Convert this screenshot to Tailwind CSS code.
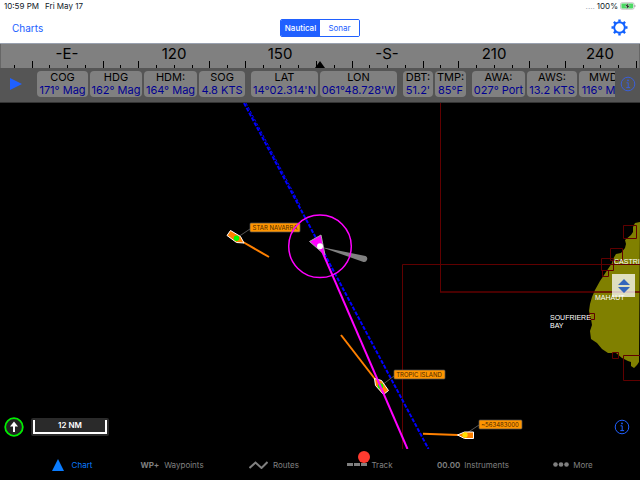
<!DOCTYPE html>
<html lang="en">
<head>
  <meta charset="UTF-8">
  <meta name="viewport" content="width=device-width, initial-scale=1.0">
  <title>Nautical Chart</title>
  <script src="https://cdn.jsdelivr.net/npm/@tailwindcss/browser@4"></script>
</head>
<body class="flex flex-col h-screen overflow-hidden bg-black font-['Inter',sans-serif]">
  <!-- Status bar -->
  <div class="flex items-center justify-between h-3 pl-1 pr-1 shrink-0 bg-white text-[8px] leading-3 text-gray-900">
    <div class="flex gap-[6px]">
      <span>10:59 PM</span>
      <span>Fri May 17</span>
    </div>
    <div class="flex items-center gap-[2px]">
      <span class="text-gray-400">....</span>
      <span>100%</span>
      <svg class="w-4 h-2" viewBox="0 0 16 8">
        <rect x="0.5" y="0.8" width="13.6" height="6.4" rx="1.6" fill="#fff" stroke="#aaa" stroke-width="0.7"/>
        <rect x="1.4" y="1.6" width="11.8" height="4.8" rx="0.8" fill="#4cd964"/>
        <path d="M8.4 0.8 5 4.5h2L6.4 7.4 10 3.6H7.8z" fill="#111" stroke="#fff" stroke-width="0.4"/>
        <path d="M14.9 3v2" stroke="#999" stroke-width="0.9"/>
      </svg>
    </div>
  </div>

  <!-- Navigation bar -->
  <header class="grid grid-cols-3 items-center h-8 px-3 shrink-0 border-b border-gray-400 bg-white text-[#2060ff]">
    <a href="#charts" class="mt-px text-[10px]">Charts</a>
    <div class="flex justify-self-center w-20 h-[18px] rounded-[2px] border border-[#2060ff] overflow-hidden text-[8px]">
      <button class="flex-1 bg-[#2060ff] text-white font-medium">Nautical</button>
      <button class="flex-1 bg-white">Sonar</button>
    </div>
    <button class="justify-self-end" aria-label="Settings">
      <svg class="w-[17px] h-[17px]" viewBox="0 0 17 17" fill="none" stroke="#1060ff">
        <circle cx="8.5" cy="8.5" r="5.3" stroke-width="1.9"/>
        <path stroke-width="2.4" d="M8.5 2.8V.5M8.5 14.2v2.3M2.8 8.5H.5M14.2 8.5h2.3M4.5 4.5 2.9 2.9M12.5 4.5l1.6-1.6M4.5 12.5l-1.6 1.6M12.5 12.5l1.6 1.6"/>
      </svg>
    </button>
  </header>

  <!-- Compass tape -->
  <svg class="block w-full shrink-0 bg-[#808080]" viewBox="0 0 640 24">
    <path d="M.5 24V0" stroke="#666"/>
    <path d="M639.5 24V0" stroke="#666"/>
    <path stroke="#000" d="M14.5 24v-3M32.5 24v-7M49.5 24v-3M67.5 24v-3M85.5 24v-3M103.5 24v-7M120.5 24v-3M138.5 24v-7M156.5 24v-3M174.5 24v-3M192.5 24v-3M209.5 24v-7M227.5 24v-3M245.5 24v-7M263.5 24v-3M280.5 24v-3M298.5 24v-3M316.5 24v-7M334.5 24v-3M352.5 24v-7M369.5 24v-3M387.5 24v-3M405.5 24v-3M423.5 24v-7M440.5 24v-3M458.5 24v-7M476.5 24v-3M494.5 24v-3M512.5 24v-3M529.5 24v-7M547.5 24v-3M565.5 24v-7M583.5 24v-3M600.5 24v-3M618.5 24v-3M636.5 24v-7"/>
    <path d="M320 17l5 7h-10z"/>
    <g font-size="15" text-anchor="middle">
      <text x="67" y="15">-E-</text>
      <text x="174" y="15">120</text>
      <text x="280" y="15">150</text>
      <text x="387" y="15">-S-</text>
      <text x="494" y="15">210</text>
      <text x="600" y="15">240</text>
    </g>
  </svg>

  <!-- Instrument strip -->
  <section class="flex items-center h-[35px] pr-1 pb-[2px] shrink-0 border-b border-[#333] bg-[#555]">
    <button class="w-[37px] shrink-0 pl-[9px]" aria-label="Play">
      <svg class="w-[14px] h-[14px]" viewBox="0 0 14 14"><path d="M1 1l12 6-12 6z" fill="#2060ff"/></svg>
    </button>
    <div class="flex flex-1 min-w-0 gap-[6px] overflow-hidden text-center text-[11px] leading-[13px] whitespace-nowrap">
      <div class="flex shrink-0 gap-[2px]">
        <div class="w-[51px] rounded-[4px] bg-[#808080]"><p>COG</p><p class="text-[#000090]">171° Mag</p></div>
        <div class="w-[52px] rounded-[4px] bg-[#808080]"><p>HDG</p><p class="text-[#000090]">162° Mag</p></div>
        <div class="w-[53px] rounded-[4px] bg-[#808080]"><p>HDM:</p><p class="text-[#000090]">164° Mag</p></div>
        <div class="w-[46px] rounded-[4px] bg-[#808080]"><p>SOG</p><p class="text-[#000090]">4.8 KTS</p></div>
      </div>
      <div class="flex shrink-0 gap-[2px]">
        <div class="w-[67px] rounded-[4px] bg-[#808080]"><p>LAT</p><p class="text-[#000090]">14°02.314'N</p></div>
        <div class="w-[77px] rounded-[4px] bg-[#808080]"><p>LON</p><p class="text-[#000090]">061°48.728'W</p></div>
      </div>
      <div class="flex shrink-0 gap-[2px]">
        <div class="w-[30px] rounded-[4px] bg-[#808080]"><p>DBT:</p><p class="text-[#000090]">51.2'</p></div>
        <div class="w-[31px] rounded-[4px] bg-[#808080]"><p>TMP:</p><p class="text-[#000090]">85°F</p></div>
      </div>
      <div class="flex shrink-0 gap-[2px]">
        <div class="w-[53px] rounded-[4px] bg-[#808080]"><p>AWA:</p><p class="text-[#000090]">027° Port</p></div>
        <div class="w-[50px] rounded-[4px] bg-[#808080]"><p>AWS:</p><p class="text-[#000090]">13.2 KTS</p></div>
        <div class="w-[52px] rounded-[4px] bg-[#808080]"><p>MWD:</p><p class="text-[#000090]">116° Mag</p></div>
      </div>
    </div>
    <button class="shrink-0 pl-[5px]" aria-label="Instrument info">
      <svg class="w-4 h-4" viewBox="0 0 16 16" fill="none" stroke="#3a5fd8">
        <circle cx="8" cy="8" r="6.8"/>
        <path d="M6.5 6.8H8.2V11.5M6.3 11.6h3.8"/>
        <circle cx="8" cy="4.4" r="0.9" fill="#3a5fd8" stroke="none"/>
      </svg>
    </button>
  </section>

  <!-- Chart -->
  <main class="relative flex-1 min-h-0">
    <svg class="block w-full h-full" viewBox="0 103 640 346" preserveAspectRatio="xMidYMid slice">
      <!-- island -->
      <path fill="#808000" d="M640 222l-5 1-2 4v5l-2 3-6 5 1 4-1 4-4 5-5 1-3 5-1 4-6 9-6 9-5 9-3 7-2 7-1 7 2 8 1 6-2 6 1 8 6 4 5 6 6 4h8l6 5 6 3 3 1 0 4 3 2 3-3 2-3z"/>
      <!-- chart boundaries -->
      <g fill="none" stroke="#600000">
        <path d="M440.5 103v189M402.5 449V264.5H640"/>
        <path d="M440 292H640" stroke-width="1.5"/>
        <path d="M623.5 225.5h13v13h-13zM610.5 248.5h12v12h-12zM601.5 258.5h12v12h-12zM602.5 270.5h6v6h-6zM589.5 313.5h5v6h-5zM612.5 352.5h6v6h-6zM640 355.5h-16.5v25H640"/>
      </g>
      <g fill="#fff" font-size="7" font-family="Liberation Sans, sans-serif">
        <text x="614" y="264">CASTRIES</text>
        <text x="595" y="300">MAHAUT</text>
        <text x="550" y="320">SOUFRIERE</text>
        <text x="550" y="328">BAY</text>
      </g>

      <!-- route -->
      <path d="M244 103L428.5 449" stroke="#0000ff" stroke-width="2" stroke-dasharray="4 1.5"/>
      <path d="M246 103L300 205" stroke="#0000ff" stroke-dasharray="3 1.5"/>

      <!-- STAR NAVARRA -->
      <path d="M238 237l12-8" stroke="#555"/>
      <path d="M243 242l26 15" stroke="#ff8000" stroke-width="2"/>
      <path d="M230.5 230.5l-3.500 5 9.500 7 7.5 .5-3.5-6.5z" fill="#ff8000" stroke="#fff"/>
      <circle cx="236.5" cy="238.3" r="2.7" fill="#0f0"/>
      <rect x="250" y="223" width="50" height="9" rx="1" fill="#ff9500" stroke="#555" stroke-width="0.7"/>
      <text x="275" y="230" font-size="6" text-anchor="middle" fill="#4a2800">STAR NAVARRA</text>

      <!-- TROPIC ISLAND -->
      <path d="M382 385l12-9" stroke="#555"/>
      <path d="M341 335l34 44" stroke="#ff8000" stroke-width="2"/>
      <path d="M374.5 378.5l7 2 7 10-5 4-8-9z" fill="#ff8000" stroke="#fff"/>
      <circle cx="380.5" cy="386" r="2.7" fill="#0f0"/>
      <rect x="394" y="370" width="51" height="9" rx="1" fill="#ff9500" stroke="#555" stroke-width="0.7"/>
      <text x="419" y="377" font-size="6" text-anchor="middle" fill="#4a2800">TROPIC ISLAND</text>

      <!-- unnamed vessel -->
      <path d="M467 433l12-8" stroke="#555"/>
      <path d="M423 433.7l35 1.3" stroke="#ff8000" stroke-width="2"/>
      <path d="M457.5 435l7-3h9v6.5h-9z" fill="#ff8000" stroke="#fff"/>
      <circle cx="465" cy="435" r="2.7" fill="#ffe000"/>
      <rect x="479" y="420" width="43" height="9" rx="1" fill="#ff9500" stroke="#555" stroke-width="0.7"/>
      <text x="500" y="427" font-size="6" text-anchor="middle" fill="#4a2800">~563483000</text>

      <!-- own ship -->
      <path d="M321 247l44.500 9a3.200 3.200 0 0 1-2 6z" fill="#808080"/>
      <path d="M309.5 241.5l11.5-6.500 4 20z" fill="#f0f" stroke="#aaa"/>
      <path d="M320 246.5L407.5 449" stroke="#f0f" stroke-width="2"/>
      <circle cx="320" cy="246.3" r="31.3" fill="none" stroke="#f0f" stroke-width="1.5"/>
      <circle cx="320" cy="246.3" r="3" fill="#fff"/>
    </svg>

    <button class="absolute right-[5px] top-[171px] flex items-center justify-center w-[23px] h-[23px] bg-white/75" aria-label="Zoom">
      <svg class="w-3 h-4" viewBox="0 0 12 16" fill="#3366bb"><path d="M6 1l6 6H0zM6 15l6-6H0z"/></svg>
    </button>

    <div class="absolute left-1 bottom-3 flex items-center gap-[7px]">
      <button aria-label="North up">
        <svg class="block w-5 h-5" viewBox="0 0 20 20">
          <circle cx="10" cy="10" r="8.8" fill="#222" stroke="#0e0" stroke-width="1.8"/>
          <path d="M10 4.5l4 5h-3V15H9V9.500H6z" fill="#fff"/>
        </svg>
      </button>
      <div class="w-[78px] h-[18px] px-[2px] pt-[2px] rounded-[2px] bg-[#2a2a2a]">
        <div class="h-[14px] border-x-2 border-b-2 border-white text-center text-[8px] leading-[11px] font-semibold text-white">12 NM</div>
      </div>
    </div>

    <button class="absolute right-[10px] bottom-[14px]" aria-label="Chart info">
      <svg class="block w-4 h-4" viewBox="0 0 16 16" fill="none" stroke="#2060ff">
        <circle cx="8" cy="8" r="6.8"/>
        <path d="M6.5 6.8H8.2V11.5M6.3 11.6h3.8"/>
        <circle cx="8" cy="4.4" r="0.9" fill="#2060ff" stroke="none"/>
      </svg>
    </button>
  </main>

  <!-- Tab bar -->
  <nav class="grid grid-cols-6 items-center h-[31px] pl-[22px] pr-[18px] shrink-0 bg-black text-[8px] text-[#808080]">
    <a href="#chart" class="flex items-center justify-center gap-2 text-[#0a7cff]">
      <svg class="w-3 h-3" viewBox="0 0 12 12"><path d="M6 0l6 12H0z" fill="#0a7cff"/></svg>
      Chart
    </a>
    <a href="#waypoints" class="flex items-center justify-center gap-[5px]"><b>WP+</b>Waypoints</a>
    <a href="#routes" class="flex items-center justify-center gap-[5px] pl-1">
      <svg class="w-[19px] h-2" viewBox="0 0 19 8" fill="none" stroke="#808080" stroke-width="2"><path d="M.5 7l6-5.5L12.5 7 18.5 1"/></svg>
      Routes
    </a>
    <a href="#track" class="relative flex items-center justify-center gap-1 pr-1">
      <svg class="w-5 h-[3px]" viewBox="0 0 20 3" fill="#808080"><path d="M0 0h6v3H0zM7 0h6v3H7zM14 0h6v3h-6z"/></svg>
      Track
      <span class="absolute left-[36px] -top-[8px] w-3 h-3 rounded-full bg-[#ff3b30]"></span>
    </a>
    <a href="#instruments" class="flex items-center justify-center gap-1 pl-[2px]"><b class="font-semibold">00.00</b>Instruments</a>
    <a href="#more" class="flex items-center justify-center gap-1 pl-[2px]">
      <svg class="w-4 h-[5px]" viewBox="0 0 16 5" fill="#808080"><circle cx="2.5" cy="2.5" r="2.3"/><circle cx="8" cy="2.5" r="2.3"/><circle cx="13.5" cy="2.5" r="2.3"/></svg>
      More
    </a>
  </nav>
</body>
</html>
